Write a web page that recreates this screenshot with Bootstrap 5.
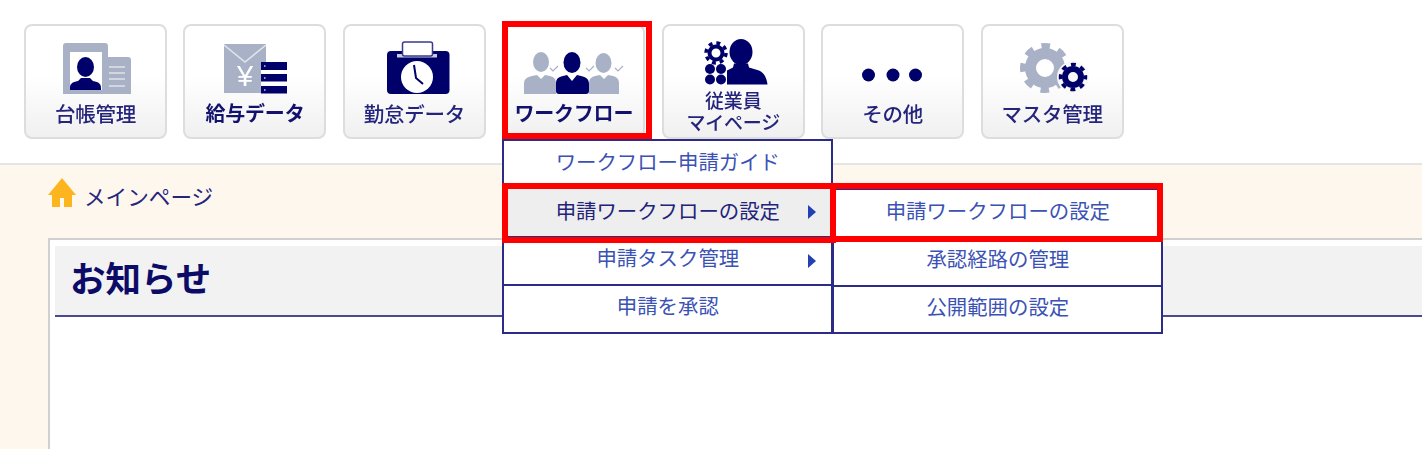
<!DOCTYPE html>
<html lang="ja">
<head>
    <meta charset="utf-8">
    <title>メインページ</title>
    <link href="https://cdn.jsdelivr.net/npm/bootstrap@5.3.0/dist/css/bootstrap.min.css" rel="stylesheet">
    <style>
        body {
            font-family: "Noto Sans CJK JP", "Liberation Sans", sans-serif;
            height: 449px;
            overflow: hidden;
            background: #fff;
        }
        .top-bar { height: 165px; padding: 24px 0 0 24px; gap: 16.45px; border-bottom: 2px solid #e5e5e5; }
        .tile-wrap { width: 143px; height: 115px; }
        .menu-tile {
            height: 100%;
            border: 2px solid #ddd;
            border-radius: 8px;
            background: linear-gradient(#fff 45%, #f0f0f0);
            color: #24247c;
            font-size: 20.5px;
            font-weight: 500;
            line-height: 24px;
            letter-spacing: -.2px;
            text-align: center;
            overflow: hidden;
        }
        .menu-tile svg { display: block; width: 139px; height: 68px; flex: none; filter: blur(.4px); }
        .tile-label { flex: 1; display: flex; flex-direction: column; justify-content: center; padding-bottom: 5px; filter: blur(.3px); }
        .tile-label.strong { font-weight: 700; font-size: 20px; color: #12126e; }
        .tile-label.two { font-size: 19px; line-height: 22px; padding-bottom: 0; margin-top: -5px; justify-content: flex-start; }
        .red-box { position: absolute; border: 6px solid #f00; pointer-events: none; z-index: 5; }
        .box-tile { left: 0; top: -3px; width: 150px; height: 118px; }
        .box-row { left: -2px; top: -6px; width: 334px; height: 60px; }
        .box-sub { left: -4px; top: -7px; width: 333px; height: 59px; }

        .fly-menu {
            position: absolute;
            z-index: 3;
            width: 331px;
            background: #fff;
            border: 2px solid #2c2c88;
            border-radius: 0;
        }
        .main-menu { left: 0; top: 115px; }
        .sub-menu { left: 328px; top: -1px; z-index: 4; }
        .fly-menu .list-group-item {
            position: relative;
            height: 48px;
            padding: 0 0 5px;
            display: flex;
            align-items: center;
            justify-content: center;
            background: #fff;
            color: #3b52b4;
            font-size: 20.4px;
            border: 0;
            border-bottom: 2px solid #2c2c88;
            border-radius: 0;
        }
        .fly-menu .list-group-item:last-child { border-bottom: 0; height: 46px; }
        .fly-menu .list-group-item.is-open { background: #eee; color: #23237a; height: 49px; }
        .fly-menu .list-group-item.is-open ~ .list-group-item { padding-bottom: 7px; }
        .sub-menu .list-group-item { height: 49px; }
        .sub-menu .list-group-item:first-child { height: 48px; }
        .fly-menu.sub-menu .list-group-item + .list-group-item { padding-bottom: 7px; }
        .fly-menu.sub-menu .list-group-item:last-child { height: 45px; }
        .has-sub::after {
            content: "";
            position: absolute;
            right: 15px;
            top: 16px;
            border-left: 8px solid #2040b4;
            border-top: 7px solid transparent;
            border-bottom: 7px solid transparent;
        }

        .page-body { background: #fef7ee; height: 284px; padding: 12px 0 0 48px; }
        .crumb { height: 61px; color: #25257c; font-size: 21.6px; line-height: 37px; gap: 8px; }
        .crumb svg { width: 28px; height: 30px; flex: none; margin-top: 1px; }
        .notice-panel { background: #fff; border: 2px solid #d0d0d0; border-right: 0; border-bottom: 0; height: 211px; padding: 6px 0 0 5px; }
        .notice-head {
            height: 71px;
            background: #f2f2f2;
            border-bottom: 2px solid #4a4a92;
            color: #0c0c68;
            font-size: 35.5px;
            font-weight: 700;
            line-height: 62px;
            padding-left: 15px;
        }
    </style>
</head>
<body>
    <!-- top menu -->
    <div class="top-bar d-flex align-items-start">
        <div class="tile-wrap">
            <div class="menu-tile d-flex flex-column">
                <svg viewBox="26 26 139 68">
                    <rect x="63" y="43" width="45" height="53" rx="3" fill="#a9b1c6"/>
                    <rect x="100" y="57" width="31" height="39" rx="3" fill="#a9b1c6"/>
                    <rect x="70" y="52" width="32" height="38" fill="#fff"/>
                    <ellipse cx="85.500" cy="67" rx="8.500" ry="10" fill="#00006a"/>
                    <path d="M70 90v-2c0-4 2-6 8-7l3-3h9l3 3c6 1 8 3 8 7v2z" fill="#00006a"/>
                    <path d="M109 67h16M109 73h16M109 79h16M109 86h16" stroke="#dfe2ea" stroke-width="1.500"/>
                </svg>
                <div class="tile-label">台帳管理</div>
            </div>
        </div>
        <div class="tile-wrap">
            <div class="menu-tile d-flex flex-column">
                <svg viewBox="185 26 139 68">
                    <path d="M224 44h42v18h-5v31h-37z" fill="#a9b1c6"/>
                    <path d="M224 45l21 17 21-17" fill="none" stroke="#e4e6ee" stroke-width="1.500"/>
                    <text x="245" y="86" font-size="29" fill="#fff" text-anchor="middle" font-family="Liberation Sans">¥</text>
                    <rect x="261" y="62" width="26" height="8" fill="#00006a"/>
                    <rect x="261" y="74" width="26" height="7.500" fill="#00006a"/>
                    <rect x="261" y="86" width="26" height="7.500" fill="#00006a"/>
                    <path d="M264 66h1.500M264 78h1.500M264 90h1.500" stroke="#c8cce0" stroke-width="1.500"/>
                </svg>
                <div class="tile-label strong">給与データ</div>
            </div>
        </div>
        <div class="tile-wrap">
            <div class="menu-tile d-flex flex-column">
                <svg viewBox="345 26 139 68">
                    <rect x="387" y="51" width="62.500" height="43" rx="4" fill="#00006a"/>
                    <rect x="397" y="54" width="40" height="3.500" fill="#c8cce0"/>
                    <rect x="402.500" y="42" width="30" height="14" rx="2" fill="#fff" stroke="#3a3a8c" stroke-width="1.500"/>
                    <circle cx="417" cy="77" r="16" fill="#fff"/>
                    <path d="M414 65l2 13 7 6" fill="none" stroke="#00006a" stroke-width="2"/>
                </svg>
                <div class="tile-label">勤怠データ</div>
            </div>
        </div>
        <div class="tile-wrap position-relative">
            <div class="menu-tile d-flex flex-column">
                <svg viewBox="505 26 139 68">
                    <ellipse cx="542" cy="62" rx="8" ry="10" fill="#a9b1c6"/>
                    <path d="M525 94v-10c0-5 3-7 8-8l5-1 4 4 4-4 5 1c4 1 6 3 6 8v10z" fill="#a9b1c6"/>
                    <ellipse cx="604.500" cy="63" rx="8" ry="10" fill="#a9b1c6"/>
                    <path d="M590 94v-10c0-5 2-7 6-8l5-1 4 4 4-4 5 1c4 1 6 3 6 8v10z" fill="#a9b1c6"/>
                    <ellipse cx="573" cy="62.500" rx="8.500" ry="10.500" fill="#00006a"/>
                    <path d="M557 91v-7c0-5 2-7 7-8l4-1 5 6 5-6 4 1c5 1 8 3 8 8v7c0 2-1 3-3 3h-27c-2 0-3-1-3-3z" fill="#00006a"/>
                    <path d="M551 68l3 3 5-5M587 68l3 3 5-5M616 68l3 3 5-5" fill="none" stroke="#a9b1c6" stroke-width="1.200"/>
                </svg>
                <div class="tile-label strong">ワークフロー</div>
            </div>
            <div class="red-box box-tile"></div>
            <!-- dropdown -->
            <ul class="list-group fly-menu main-menu">
                <li class="list-group-item">ワークフロー申請ガイド</li>
                <li class="list-group-item has-sub is-open">
                    申請ワークフローの設定
                    <div class="red-box box-row"></div>
                    <ul class="list-group fly-menu sub-menu">
                        <li class="list-group-item">申請ワークフローの設定<div class="red-box box-sub"></div></li>
                        <li class="list-group-item">承認経路の管理</li>
                        <li class="list-group-item">公開範囲の設定</li>
                    </ul>
                </li>
                <li class="list-group-item has-sub">申請タスク管理</li>
                <li class="list-group-item">申請を承認</li>
            </ul>
        </div>
        <div class="tile-wrap">
            <div class="menu-tile d-flex flex-column">
                <svg viewBox="664 26 139 68">
                    <circle cx="716" cy="53" r="6.500" fill="none" stroke="#00006a" stroke-width="4"/>
                    <circle cx="716" cy="53" r="10" fill="none" stroke="#00006a" stroke-width="3.500" stroke-dasharray="3.930 3.930"/>
                    <circle cx="710" cy="69" r="5" fill="#00006a"/>
                    <circle cx="721" cy="69" r="5" fill="#00006a"/>
                    <circle cx="710" cy="79.500" r="5" fill="#00006a"/>
                    <circle cx="721" cy="79.500" r="5" fill="#00006a"/>
                    <ellipse cx="741" cy="52" rx="11.500" ry="13" fill="#00006a"/>
                    <path d="M727 84.500v-14l6-3 1-4h14l1 4 10 3c5 2 8 8 8.500 14z" fill="#00006a"/>
                </svg>
                <div class="tile-label two">従業員<br>マイページ</div>
            </div>
        </div>
        <div class="tile-wrap">
            <div class="menu-tile d-flex flex-column">
                <svg viewBox="823 26 139 68">
                    <circle cx="868.500" cy="75" r="6.500" fill="#00006a"/>
                    <circle cx="893" cy="75" r="6.500" fill="#00006a"/>
                    <circle cx="915.500" cy="75" r="6.500" fill="#00006a"/>
                </svg>
                <div class="tile-label">その他</div>
            </div>
        </div>
        <div class="tile-wrap">
            <div class="menu-tile d-flex flex-column">
                <svg viewBox="983 26 139 68">
                    <circle cx="1045" cy="68" r="14.500" fill="none" stroke="#a9b1c6" stroke-width="11"/>
                    <circle cx="1045" cy="68" r="22" fill="none" stroke="#a9b1c6" stroke-width="6" stroke-dasharray="8.640 8.640" stroke-dashoffset="4.320"/>
                    <circle cx="1073" cy="77" r="16" fill="#f8f8f8"/>
                    <circle cx="1073" cy="77" r="8" fill="none" stroke="#00006a" stroke-width="6"/>
                    <circle cx="1073" cy="77" r="12.500" fill="none" stroke="#00006a" stroke-width="3.500" stroke-dasharray="4.910 4.910" stroke-dashoffset="2.450"/>
                </svg>
                <div class="tile-label">マスタ管理</div>
            </div>
        </div>
    </div>

    <!-- content -->
    <div class="page-body">
        <div class="crumb d-flex align-items-start">
            <svg viewBox="48 178 28 30">
                <path d="M62 178l14 17h-4v12h-8v-9h-4v9h-8v-12h-4z" fill="#fdb51f"/>
            </svg>
            <span>メインページ</span>
        </div>
        <div class="notice-panel">
            <div class="notice-head">お知らせ</div>
        </div>
    </div>

    <script src="https://cdn.jsdelivr.net/npm/bootstrap@5.3.0/dist/js/bootstrap.bundle.min.js"></script>
</body>
</html>
